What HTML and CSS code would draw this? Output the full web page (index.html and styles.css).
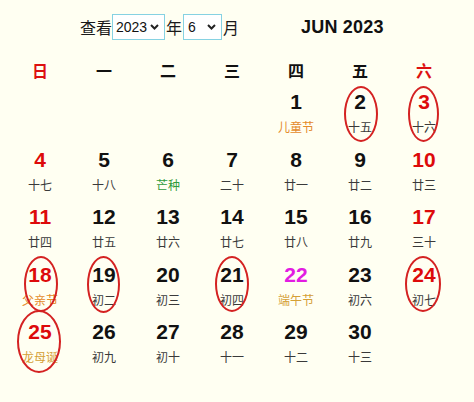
FILE: index.html
```html
<!DOCTYPE html>
<html lang="zh">
<head>
<meta charset="utf-8">
<title>2023年6月</title>
<link rel="stylesheet" href="styles.css">
</head>
<body>
<div class="page">
  <div class="head">
    <div class="picker">
      <span>查看</span><select class="sel sel-year"><option>2023</option></select><span>年</span><select class="sel sel-month"><option>6</option></select><span>月</span>
    </div>
    <div class="title">JUN 2023</div>
  </div>
  <div class="weekdays">
    <div class="wd red">日</div><div class="wd">一</div><div class="wd">二</div><div class="wd">三</div><div class="wd">四</div><div class="wd">五</div><div class="wd red">六</div>
  </div>
  <div class="days">
    <div class="day"></div><div class="day"></div><div class="day"></div><div class="day"></div>
    <div class="day"><span class="num">1</span><span class="lunar fest">儿童节</span></div>
    <div class="day"><span class="num">2</span><span class="lunar">十五</span><i class="ring r1"></i></div>
    <div class="day"><span class="num red">3</span><span class="lunar">十六</span><i class="ring r1 narrow"></i></div>

    <div class="day"><span class="num red">4</span><span class="lunar">十七</span></div>
    <div class="day"><span class="num">5</span><span class="lunar">十八</span></div>
    <div class="day"><span class="num">6</span><span class="lunar term">芒种</span></div>
    <div class="day"><span class="num">7</span><span class="lunar">二十</span></div>
    <div class="day"><span class="num">8</span><span class="lunar">廿一</span></div>
    <div class="day"><span class="num">9</span><span class="lunar">廿二</span></div>
    <div class="day"><span class="num red">10</span><span class="lunar">廿三</span></div>

    <div class="day"><span class="num red">11</span><span class="lunar">廿四</span></div>
    <div class="day"><span class="num">12</span><span class="lunar">廿五</span></div>
    <div class="day"><span class="num">13</span><span class="lunar">廿六</span></div>
    <div class="day"><span class="num">14</span><span class="lunar">廿七</span></div>
    <div class="day"><span class="num">15</span><span class="lunar">廿八</span></div>
    <div class="day"><span class="num">16</span><span class="lunar">廿九</span></div>
    <div class="day"><span class="num red">17</span><span class="lunar">三十</span></div>

    <div class="day"><span class="num red">18</span><span class="lunar fest">父亲节</span><i class="ring r4"></i></div>
    <div class="day"><span class="num">19</span><span class="lunar">初二</span><i class="ring r4 narrow"></i></div>
    <div class="day"><span class="num">20</span><span class="lunar">初三</span></div>
    <div class="day"><span class="num">21</span><span class="lunar">初四</span><i class="ring r4 left"></i></div>
    <div class="day"><span class="num holiday">22</span><span class="lunar gold">端午节</span></div>
    <div class="day"><span class="num">23</span><span class="lunar">初六</span></div>
    <div class="day"><span class="num red">24</span><span class="lunar">初七</span><i class="ring r4 wide"></i></div>

    <div class="day"><span class="num red">25</span><span class="lunar gold">龙母诞</span><i class="ring big"></i></div>
    <div class="day"><span class="num">26</span><span class="lunar">初九</span></div>
    <div class="day"><span class="num">27</span><span class="lunar">初十</span></div>
    <div class="day"><span class="num">28</span><span class="lunar">十一</span></div>
    <div class="day"><span class="num">29</span><span class="lunar">十二</span></div>
    <div class="day"><span class="num">30</span><span class="lunar">十三</span></div>
    <div class="day"></div>
  </div>
</div>
</body>
</html>
```

FILE: styles.css
```css
html, body {
  margin: 0;
  padding: 0;
  background: #fffff2;
}
body {
  width: 474px;
  height: 402px;
  overflow: hidden;
  font-family: "Liberation Sans", "Noto Sans CJK SC", sans-serif;
  color: #111;
}
.page {
  padding: 0 8px;
}
.head {
  height: 54px;
  display: flex;
  align-items: center;
  padding-left: 72px;
}
.picker {
  display: flex;
  align-items: center;
  font-family: "Noto Sans CJK SC", sans-serif;
  font-size: 16px;
  color: #1a1a1a;
}
.picker span {
  line-height: 20px;
}
.sel {
  appearance: none;
  -webkit-appearance: none;
  height: 26px;
  margin: 0 1px 0 0;
  border: 1px solid #86d2e2;
  border-radius: 0;
  background-color: #fff;
  background-image: url("data:image/svg+xml;utf8,<svg xmlns='http://www.w3.org/2000/svg' width='9' height='6' viewBox='0 0 9 6'><path d='M1 1l3.5 3.5L8 1' fill='none' stroke='%23222' stroke-width='2'/></svg>");
  background-repeat: no-repeat;
  background-position: right 5px center;
  font-family: "Liberation Sans", sans-serif;
  font-size: 14px;
  color: #111;
  padding: 0 0 0 3px;
  outline: none;
}
.sel-year {
  width: 53px;
}
.sel-month {
  width: 39px;
  padding-left: 4px;
  margin-left: 1px;
}
.title {
  margin-left: 62px;
  font-size: 18px;
  font-weight: bold;
  letter-spacing: 0.2px;
  color: #111;
}
.weekdays {
  display: grid;
  grid-template-columns: repeat(7, 64px);
  height: 32px;
}
.wd {
  text-align: center;
  line-height: 32px;
  font-family: "Noto Sans CJK SC", sans-serif;
  font-weight: bold;
  font-size: 16px;
  color: #111;
}
.days {
  margin-top: 3px;
  display: grid;
  grid-template-columns: repeat(7, 64px);
  grid-auto-rows: 57.5px;
}
.day {
  position: relative;
  text-align: center;
}
.num {
  display: block;
  line-height: 26px;
  font-size: 21px;
  font-weight: bold;
  color: #111;
}
.lunar {
  display: block;
  line-height: 24px;
  font-family: "Noto Sans CJK SC", sans-serif;
  font-size: 12px;
  color: #3a3a3a;
}
.red {
  color: #dd0a0a;
}
.wd.red {
  color: #dd1010;
}
.num.holiday {
  color: #e21ce2;
}
.lunar.fest {
  color: #e48a2a;
}
.lunar.term {
  color: #2e9a3c;
}
.lunar.gold {
  color: #d5a035;
}
.ring {
  position: absolute;
  left: 50%;
  top: -3px;
  width: 34px;
  height: 56px;
  margin-left: -16px;
  box-sizing: border-box;
  border: 2.5px solid #d42222;
  border-radius: 50%;
  pointer-events: none;
}
.ring.narrow {
  width: 31px;
  margin-left: -16px;
}
.ring.r4 {
  top: -6px;
}
.ring.r4.narrow {
  width: 33px;
  height: 57px;
  margin-left: -17px;
}
.ring.left {
  margin-left: -17px;
}
.ring.wide {
  width: 36px;
  margin-left: -19px;
}
.ring.big {
  top: -9px;
  width: 44px;
  height: 63px;
  margin-left: -23px;
}
```
